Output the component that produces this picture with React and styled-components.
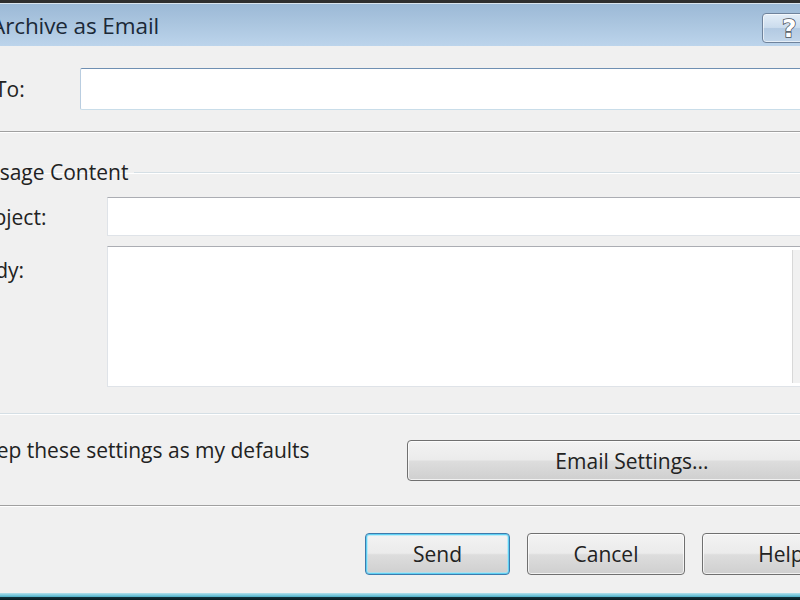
import React from 'react'
import styled, { createGlobalStyle } from 'styled-components'

const GlobalStyle = createGlobalStyle`
    html, body {
        margin: 0;
        padding: 0;
        background: #f0f0f0;
    }
    * {
        box-sizing: border-box;
    }
`

const Page = styled.div`
    width: 800px;
    height: 600px;
    overflow: hidden;
    display: flex;
    flex-direction: column;
    background: #f0f0f0;
    font-family: "Open Sans", "Noto Sans", sans-serif;
    font-size: 21px;
    color: #222222;
`
const TopEdge = styled.div`
    height: 4px;
    flex: none;
    background: #2e2e2e;
    border-bottom: 1px solid #d9e4ee;
`
const TitleBar = styled.div`
    height: 42px;
    flex: none;
    display: flex;
    align-items: center;
    justify-content: space-between;
    background: linear-gradient(to bottom, #9cb9d6 0%, #aac5df 45%, #bcd4eb 100%);
`
const Title = styled.div`
    margin-left: -9px;
    font-size: 22.5px;
    color: #1b2938;
    letter-spacing: -0.1px;
`
const HelpButton = styled.div`
    width: 60px;
    height: 30px;
    margin-right: -22px;
    margin-top: 6px;
    border: 1px solid #6f839c;
    border-radius: 4px;
    background: linear-gradient(to bottom, #e4eef8 0%, #cbdced 48%, #b3cae2 52%, #c2d6ea 100%);
    box-shadow: inset 0 0 0 1px rgba(255, 255, 255, 0.6);
    display: flex;
    align-items: center;
    padding-left: 19px;
    font-family: "DejaVu Sans", sans-serif;
    font-weight: bold;
    font-size: 25px;
    color: #ffffff;
    -webkit-text-stroke: 1.5px #4a4f58;
    paint-order: stroke fill;
`
const Content = styled.div`
    margin-left: -60px;
    width: 900px;
    display: flex;
    flex-direction: column;
`
const FieldRow = styled.div`
    display: flex;
    align-items: ${props => props.top ? 'flex-start' : 'center'};
    padding-left: ${props => props.indent}px;
    margin-top: ${props => props.gap || 0}px;
`
const Label = styled.label`
    width: ${props => props.width}px;
    flex: none;
    padding-top: ${props => props.top ? 10 : 0}px;
`
const ToInput = styled.div`
    flex: 1;
    height: 42px;
    background: #fff;
    border: 1px solid #b9cde0;
    border-top-color: #6f8fb2;
    border-bottom-color: #c9dde9;
    border-radius: 2px;
`
const TextBox = styled.div`
    flex: 1;
    height: ${props => props.height}px;
    background: #fff;
    border: 1px solid #dfe3e8;
    border-top-color: #abadb3;
    display: flex;
    justify-content: flex-end;
`
const ScrollTrack = styled.div`
    width: 46px;
    margin: 3px 0;
    background: #f1f1f1;
    border-left: 1px solid #d8d8d8;
`
const Separator = styled.div`
    height: 2px;
    margin-top: ${props => props.gap}px;
    border-top: 1px solid #a0a0a0;
    border-bottom: 1px solid #ffffff;
`
const GroupBox = styled.fieldset`
    margin: 27px 0 0 8px;
    padding: 0 0 26px 0;
    border: 1px solid #d5dfe5;
    box-shadow: 0 1px 0 #ffffff, inset 0 1px 0 #ffffff;
    min-width: 0;
`
const Legend = styled.legend`
    margin-left: 4px;
    padding: 0 6px;
    line-height: 24px;
`
const BottomRow = styled.div`
    display: flex;
    align-items: flex-start;
    margin-top: 26px;
    padding-left: 4px;
`
const CheckBox = styled.div`
    width: 24px;
    height: 24px;
    flex: none;
    margin-top: 1px;
    margin-right: 4px;
    border: 1px solid #8f8f8f;
    background: linear-gradient(135deg, #dcdcdc, #ffffff);
`
const CheckText = styled.div`
    width: 435px;
    flex: none;
    line-height: 24px;
    margin-top: -2px;
`
const Button = styled.div`
    width: ${props => props.width}px;
    height: ${props => props.height || 42}px;
    flex: none;
    display: flex;
    align-items: center;
    justify-content: center;
    border: 1px solid ${props => props.focused ? '#3d7bad' : '#707070'};
    border-radius: 4px;
    background: linear-gradient(to bottom, #f3f3f3 0%, #ebebeb 48%, #dddddd 52%, #cfcfcf 100%);
    box-shadow: inset 0 0 0 1px ${props => props.focused ? '#5fd0f3' : 'rgba(255, 255, 255, 0.7)'}
        ${props => props.focused ? ', inset 0 0 0 2px rgba(160, 230, 250, 0.6)' : ''};
    color: #222222;
`
const ButtonRow = styled.div`
    display: flex;
    gap: 17px;
    margin-top: 26px;
    padding-left: 425px;
`
const Spacer = styled.div`
    flex: 1;
`
const BottomEdge = styled.div`
    height: 7px;
    flex: none;
    background: linear-gradient(to bottom, #b4e0ec 0%, #7cc9dc 30%, #4fb0c8 55%, #10303a 60%, #071a20 100%);
`

export default function App() {
    return (
        <Page>
            <GlobalStyle />
            <TopEdge />
            <TitleBar>
                <Title>Archive as Email</Title>
                <HelpButton>?</HelpButton>
            </TitleBar>
            <Content>
                <FieldRow indent={55} gap={22}>
                    <Label width={85}>To:</Label>
                    <ToInput />
                </FieldRow>
                <Separator gap={21} />
                <GroupBox>
                    <Legend>Message Content</Legend>
                    <FieldRow indent={20} gap={13}>
                        <Label width={138}>Subject:</Label>
                        <TextBox height={39} />
                    </FieldRow>
                    <FieldRow indent={20} gap={10} top>
                        <Label width={138} top>Body:</Label>
                        <TextBox height={141}>
                            <ScrollTrack />
                        </TextBox>
                    </FieldRow>
                </GroupBox>
                <BottomRow>
                    <CheckBox />
                    <CheckText>Keep these settings as my defaults</CheckText>
                    <Button width={450} height={41}>Email Settings...</Button>
                </BottomRow>
                <Separator gap={24} />
                <ButtonRow>
                    <Button width={145} focused>Send</Button>
                    <Button width={158}>Cancel</Button>
                    <Button width={158}>Help</Button>
                </ButtonRow>
            </Content>
            <Spacer />
            <BottomEdge />
        </Page>
    )
}
